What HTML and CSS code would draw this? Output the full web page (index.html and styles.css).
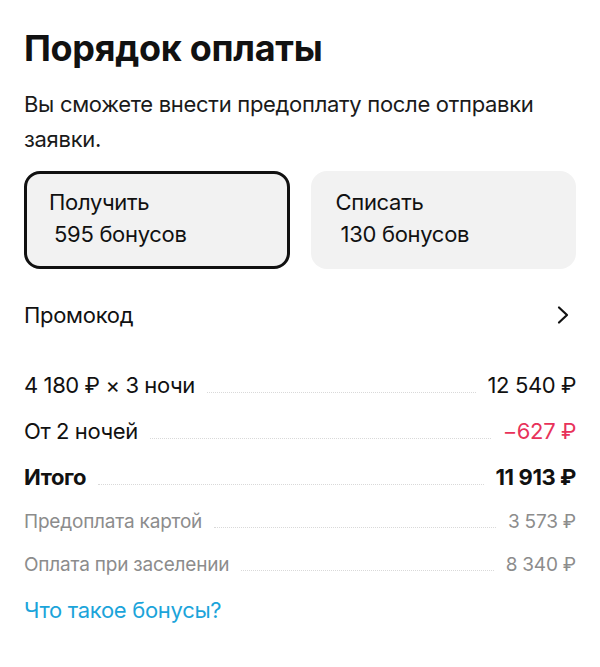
FILE: index.html
```html
<!DOCTYPE html>
<html lang="ru">
<head>
<meta charset="utf-8">
<link rel="stylesheet" href="styles.css">
</head>
<body>
<main class="page">
  <h1 class="title">Порядок оплаты</h1>
  <p class="lead">Вы сможете внести предоплату после отправки заявки.</p>
  <div class="cards">
    <div class="card card--active">
      <div>Получить</div>
      <div class="card-sub">595 бонусов</div>
    </div>
    <div class="card">
      <div>Списать</div>
      <div class="card-sub">130 бонусов</div>
    </div>
  </div>
  <div class="promo">
    <span>Промокод</span>
    <svg class="chev" width="14" height="22" viewBox="0 0 14 22"><path d="M3 3.5l8 7.5-8 7.5" fill="none" stroke="#111" stroke-width="2.2" stroke-linecap="round" stroke-linejoin="round"/></svg>
  </div>
  <div class="rows">
    <div class="row"><span>4 180 ₽ × 3 ночи</span><i class="dots"></i><span>12 540 ₽</span></div>
    <div class="row"><span>От 2 ночей</span><i class="dots"></i><span class="red">−627 ₽</span></div>
    <div class="row row--bold"><span>Итого</span><i class="dots"></i><span>11 913 ₽</span></div>
    <div class="row row--muted"><span>Предоплата картой</span><i class="dots"></i><span>3 573 ₽</span></div>
    <div class="row row--muted"><span>Оплата при заселении</span><i class="dots"></i><span>8 340 ₽</span></div>
  </div>
  <a class="link" href="#">Что такое бонусы?</a>
</main>
</body>
</html>
```
FILE: styles.css
```css
* { box-sizing: border-box; }
html, body { margin: 0; background: #fff; }
body { font-family: Inter, "Noto Sans", sans-serif; color: #111; }
.page { padding: 26px 24px 0 24px; }
.title { margin: 0; font-size: 36px; font-weight: 700; line-height: 44px; letter-spacing: -0.3px; }
.lead { margin: 17px 0 0; font-size: 22px; line-height: 35px; color: #1a1a1a; letter-spacing: -0.3px; padding-right: 20px; }
.cards { display: grid; grid-template-columns: 1fr 1fr; gap: 21px; margin-top: 14px; }
.card { background: #f2f2f2; border-radius: 16px; height: 98px; padding: 12px 22px; font-size: 22px; line-height: 32px; letter-spacing: -0.3px; border: 3px solid transparent; }
.card--active { border-color: #111; }
.card-sub { padding-left: 5px; }
.promo { display: flex; justify-content: space-between; align-items: center; margin-top: 26px; height: 40px; font-size: 22px; letter-spacing: -0.3px; }
.chev { margin-right: 6px; }
.rows { margin-top: 27px; }
.row { display: flex; align-items: baseline; font-size: 22px; height: 46px; line-height: 46px; letter-spacing: -0.4px; }
.row--muted { height: 43px; line-height: 43px; font-size: 19px; color: #8c8c8c; letter-spacing: -0.2px; }
.dots { flex: 1; border-bottom: 1.5px dotted #d9d9d9; margin: 0 12px; height: 0; }
.row--bold { font-weight: 700; }
.red { color: #e8325a; }
.link { display: block; margin-top: 9px; font-size: 22px; line-height: 30px; color: #1ba4da; text-decoration: none; letter-spacing: -0.3px; }
```
